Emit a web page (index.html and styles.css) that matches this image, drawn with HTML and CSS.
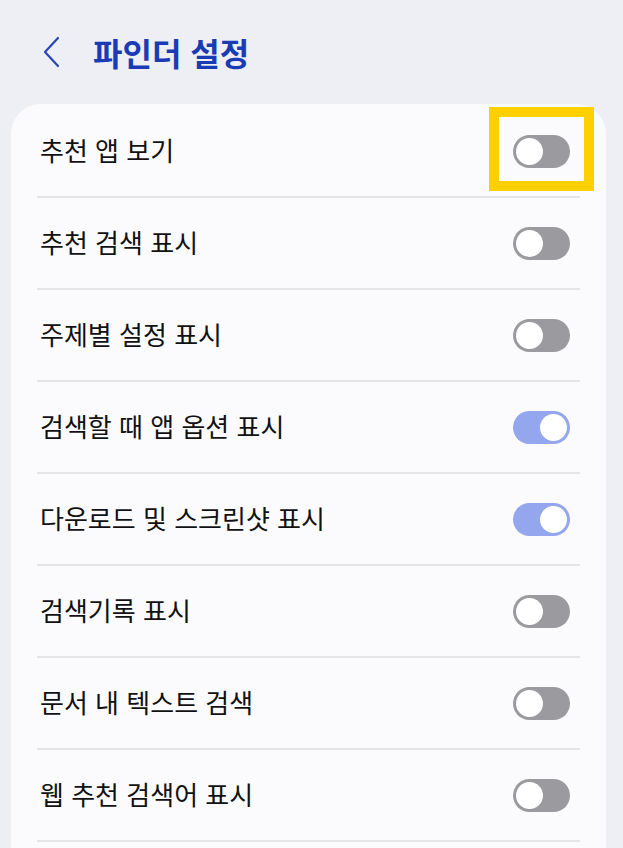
FILE: index.html
```html
<!DOCTYPE html>
<html lang="ko">
<head>
  <meta charset="utf-8">
  <title>파인더 설정</title>
  <link rel="stylesheet" href="styles.css">
</head>
<body>
  <div class="header">
    <svg class="back" width="20" height="32" viewBox="0 0 20 32">
      <path d="M16 2 L3 16 L16 30" fill="none" stroke="#2a44b8" stroke-width="2.2" stroke-linecap="round" stroke-linejoin="round"/>
    </svg>
    <h1>파인더 설정</h1>
  </div>
  <div class="card">
    <div class="row">
      <span class="label">추천 앱 보기</span>
      <span class="toggle highlight"><span class="knob"></span></span>
    </div>
    <div class="row">
      <span class="label">추천 검색 표시</span>
      <span class="toggle"><span class="knob"></span></span>
    </div>
    <div class="row">
      <span class="label">주제별 설정 표시</span>
      <span class="toggle"><span class="knob"></span></span>
    </div>
    <div class="row">
      <span class="label">검색할 때 앱 옵션 표시</span>
      <span class="toggle on"><span class="knob"></span></span>
    </div>
    <div class="row">
      <span class="label">다운로드 및 스크린샷 표시</span>
      <span class="toggle on"><span class="knob"></span></span>
    </div>
    <div class="row">
      <span class="label">검색기록 표시</span>
      <span class="toggle"><span class="knob"></span></span>
    </div>
    <div class="row">
      <span class="label">문서 내 텍스트 검색</span>
      <span class="toggle"><span class="knob"></span></span>
    </div>
    <div class="row">
      <span class="label">웹 추천 검색어 표시</span>
      <span class="toggle"><span class="knob"></span></span>
    </div>
  </div>
</body>
</html>
```

FILE: styles.css
```css
body {
  margin: 0;
  background-color: #eeeff4;
  font-family: "Noto Sans CJK KR", "Noto Sans", sans-serif;
  color: #111;
  overflow: hidden;
}

.header {
  display: flex;
  align-items: center;
  height: 104px;
  padding-left: 42px;
}

.back {
  display: block;
  margin-right: 31px;
}

h1 {
  margin: 0;
  font-size: 32px;
  font-weight: bold;
  color: #1a3ab6;
}

.card {
  margin-left: 11px;
  width: 595px;
  padding-top: 2px;
  padding-bottom: 40px;
  background-color: #fbfbfd;
  border-radius: 30px 30px 0 0;
}

.row {
  display: flex;
  align-items: center;
  justify-content: space-between;
  height: 90px;
  margin: 0 26px;
  border-bottom: 2px solid #e5e5e9;
}

.label {
  padding-left: 3px;
  padding-bottom: 4px;
  font-size: 26px;
}

.toggle {
  position: relative;
  display: flex;
  align-items: center;
  width: 57px;
  height: 33px;
  margin-right: 10px;
  padding: 0 3px;
  box-sizing: border-box;
  border-radius: 17px;
  background-color: #9b9b9f;
}

.knob {
  width: 27px;
  height: 27px;
  border-radius: 50%;
  background-color: #fff;
}

.toggle.on {
  justify-content: flex-end;
  background-color: #94a6ee;
}

.highlight::after {
  content: "";
  position: absolute;
  left: -24px;
  top: -28px;
  width: 105px;
  height: 84px;
  box-sizing: border-box;
  border: 10px solid #ffd000;
}
```
